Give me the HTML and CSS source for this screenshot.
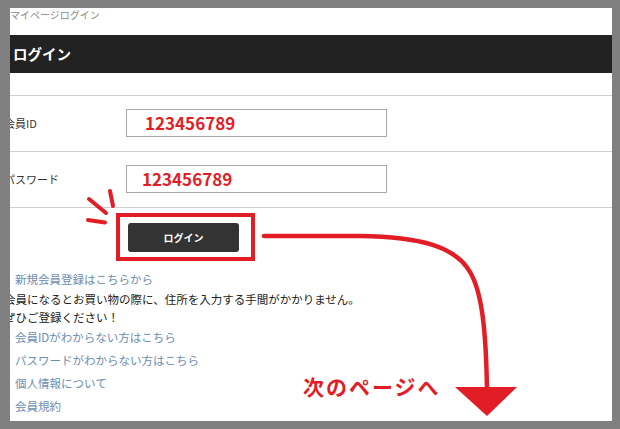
FILE: index.html
```html
<!DOCTYPE html>
<html lang="ja">
<head>
    <meta charset="UTF-8">
    <meta name="viewport" content="width=device-width, initial-scale=1.0">
    <title>マイページログイン</title>
    <link rel="stylesheet" href="styles.css">
</head>
<body>
    <div class="shot">
        <div class="page">
            <p class="breadcrumb">マイページログイン</p>
            <h1 class="title-bar">ログイン</h1>

            <div class="content">
                <div class="login-form">
                    <div class="form-row">
                        <div class="label">会員ID</div>
                        <div class="field">123456789</div>
                    </div>
                    <div class="form-row">
                        <div class="label">パスワード</div>
                        <div class="field field-pass">123456789</div>
                    </div>
                </div>

                <div class="actions">
                    <button class="btn-login">ログイン</button>
                </div>

                <ul class="links">
                    <li><a href="#register">新規会員登録はこちらから</a></li>
                    <li class="note">会員になるとお買い物の際に、住所を入力する手間がかかりません。<br>ぜひご登録ください！</li>
                    <li><a href="#id">会員IDがわからない方はこちら</a></li>
                    <li><a href="#pass">パスワードがわからない方はこちら</a></li>
                    <li><a href="#privacy">個人情報について</a></li>
                    <li><a href="#terms">会員規約</a></li>
                </ul>
            </div>
        </div>
    </div>

    <!-- hand drawn red marks over the screenshot -->
    <svg class="marks" width="620" height="429" viewBox="0 0 620 429">
        <g fill="none" stroke="#e31d26" stroke-width="4" stroke-linecap="round">
            <line x1="110" y1="191" x2="113" y2="206"/>
            <line x1="89" y1="199" x2="106" y2="213"/>
            <line x1="88" y1="220" x2="105" y2="222.5"/>
            <rect x="118" y="215" width="135" height="44" stroke-linecap="butt"/>
            <path d="M264 236 L360 236 C420 237 455 246 470 272 C482 292 486 330 487 390" stroke-width="4.5"/>
        </g>
        <polygon points="455,387 517,387 487,416" fill="#e31d26"/>
    </svg>
    <span class="next-note">次のページへ</span>
</body>
</html>
```

FILE: styles.css
```css
* {
    margin: 0;
    padding: 0;
    box-sizing: border-box;
    font-family: "Noto Sans CJK JP", "Liberation Sans", sans-serif;
}
body {
    background-color: #808080;
    color: #222;
    width: 620px;
    height: 429px;
    overflow: hidden;
    position: relative;
}
.shot {
    padding: 8px 8px 8px 10px;
}
.page {
    width: 602px;
    height: 413px;
    background-color: #fff;
    overflow: hidden;
}
.breadcrumb {
    height: 27px;
    padding-top: 1px;
    font-size: 10px;
    line-height: 11px;
    color: #8a8a8a;
}
.title-bar {
    height: 38px;
    line-height: 38px;
    background-color: #222;
    color: #fff;
    font-size: 14.5px;
    font-weight: bold;
    padding-left: 3px;
    margin-bottom: 22px;
}
.content {
    margin-left: -6px;
}
.login-form {
    border-top: 1px solid #cfcfcf;
}
.form-row {
    display: flex;
    align-items: center;
    padding: 13px 0 14px;
    border-bottom: 1px solid #cfcfcf;
}
.label {
    width: 122px;
    font-size: 11px;
    color: #333;
}
.field {
    width: 261px;
    height: 28px;
    border: 1px solid #a8a8a8;
    color: #e31d26;
    font-size: 17px;
    font-weight: bold;
    line-height: 25px;
    padding-left: 18px;
}
.field-pass {
    padding-left: 15px;
}
.actions {
    padding-top: 15px;
}
.btn-login {
    margin-left: 124px;
    width: 111px;
    height: 29px;
    background-color: #333;
    color: #fff;
    border: none;
    border-radius: 3px;
    font-size: 10px;
    font-weight: bold;
}
.links {
    list-style: none;
    margin-top: 16px;
    font-size: 11.5px;
}
.links li {
    line-height: 23px;
    padding-left: 11px;
}
.links a {
    color: #6c8db2;
    text-decoration: none;
}
.links .note {
    line-height: 17.5px;
    padding-left: 0;
    color: #222;
}
.marks {
    position: absolute;
    top: 0;
    left: 0;
    pointer-events: none;
}
.next-note {
    position: absolute;
    left: 303px;
    top: 376px;
    font-size: 21px;
    line-height: 20px;
    font-weight: bold;
    letter-spacing: 2px;
    color: #e31d26;
}
```
